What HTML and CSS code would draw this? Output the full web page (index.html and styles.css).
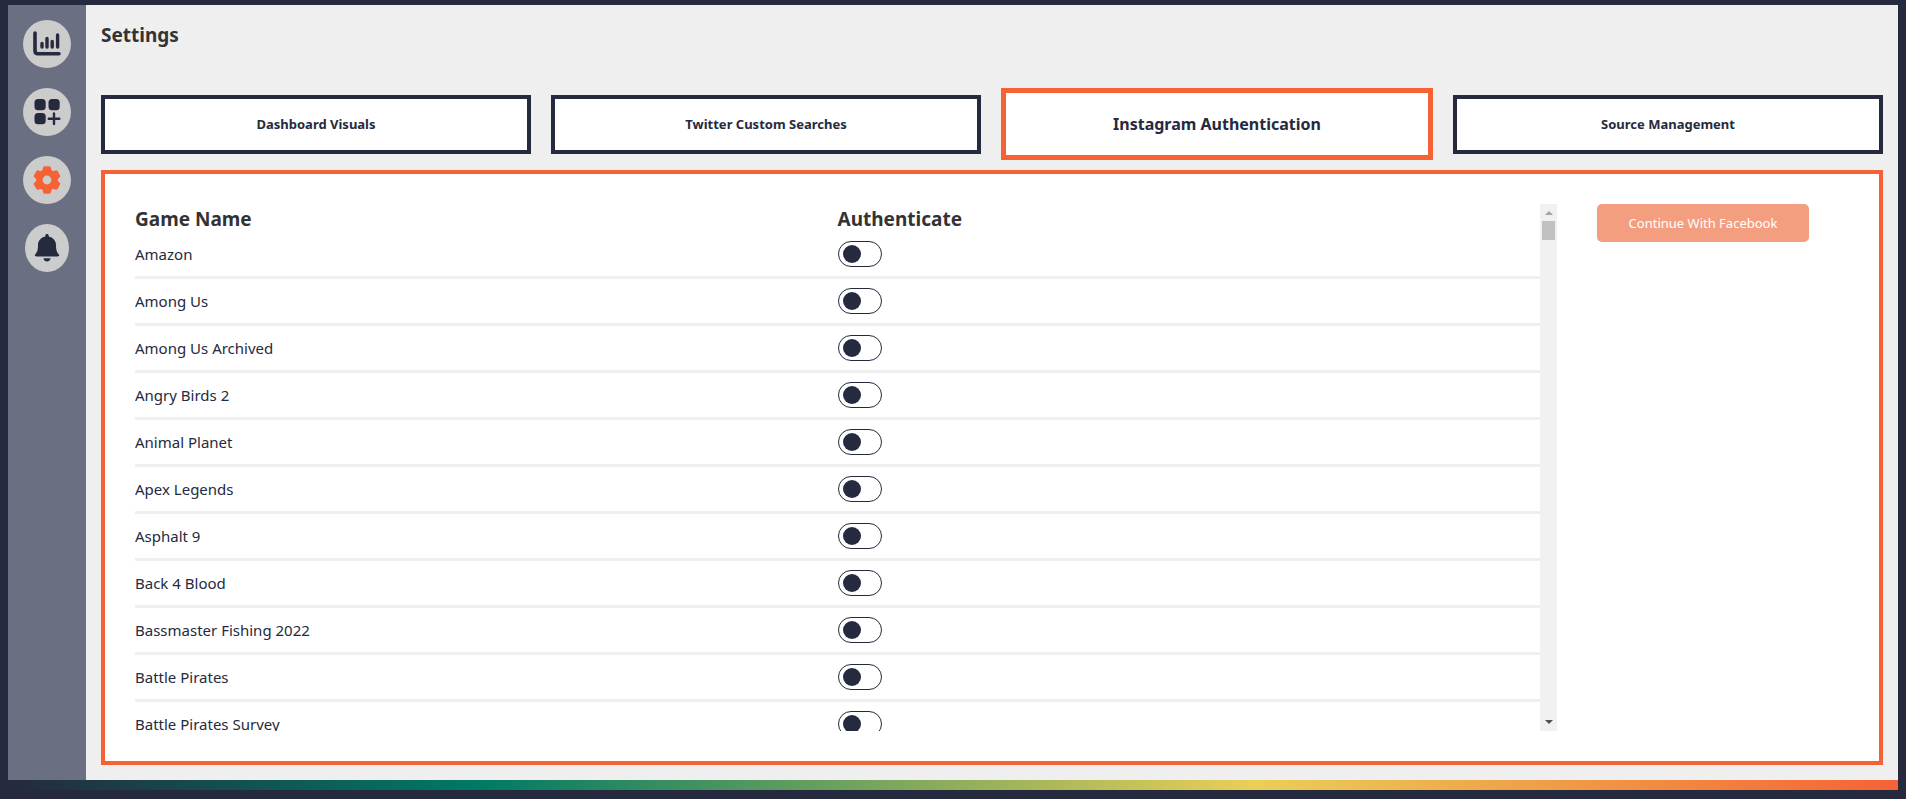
FILE: index.html
```html
<!DOCTYPE html>
<html lang="en">

<head>
    <meta charset="UTF-8">
    <meta name="viewport" content="width=device-width, initial-scale=1.0">
    <title>Settings</title>
    <link rel="stylesheet" href="styles.css">
</head>

<body>
    <div class="app">
        <nav class="sidebar">
            <a href="#" class="nav-item" aria-label="Dashboard">
                <svg width="28" height="26" viewBox="0 0 28 26" fill="none" stroke="#252a3e" stroke-linecap="round">
                    <path d="M2 2v17.800q0 3 3 3h21" stroke-width="3.600" />
                    <path d="M9 12.500v3.500M14 7.500v8.500M19.200 10.500v5.500M24.600 4v12" stroke-width="3.400" />
                </svg>
            </a>
            <a href="#" class="nav-item" aria-label="Add source">
                <svg width="28" height="28" viewBox="0 0 28 28" fill="#252a3e">
                    <rect x="1.500" y="1" width="11.200" height="11.200" rx="3.500" />
                    <rect x="15.500" y="1" width="11.200" height="11.200" rx="3.500" />
                    <rect x="1.500" y="15" width="11.200" height="11.200" rx="3.500" />
                    <path d="M21 15.500v10.500M15.700 20.700h10.600" stroke="#252a3e" stroke-width="2.400" stroke-linecap="round" />
                </svg>
            </a>
            <a href="#" class="nav-item" aria-label="Settings">
                <svg width="28" height="28" viewBox="-14 -14 28 28" fill="#f66235">
                    <circle r="7.300" fill="none" stroke="#f66235" stroke-width="5.800" />
                    <path id="tooth" d="M-6 -8Q-4.300 -9.500 -4 -12Q-3.800 -13.700 -2.300 -13.700H2.300Q3.800 -13.700 4 -12Q4.300 -9.500 6 -8L4 -6H-4z" />
                    <use href="#tooth" transform="rotate(60)" />
                    <use href="#tooth" transform="rotate(120)" />
                    <use href="#tooth" transform="rotate(180)" />
                    <use href="#tooth" transform="rotate(240)" />
                    <use href="#tooth" transform="rotate(300)" />
                </svg>
            </a>
            <a href="#" class="nav-item narrow" aria-label="Notifications">
                <svg width="26" height="30" viewBox="0 0 26 30" fill="#252a3e">
                    <path d="M13 1c1 0 1.700.7 1.700 1.700v.8c4.300.8 7.300 4.300 7.300 8.500 0 5 .8 7 2.700 9.200 1 1.200.5 2.300-1.200 2.300h-21c-1.700 0-2.200-1.100-1.200-2.300C3.200 19 4 17 4 12c0-4.200 3-7.700 7.300-8.500v-.8C11.300 1.700 12 1 13 1z" />
                    <path d="M9.500 25.300h7c0 2-1.500 3.200-3.500 3.200s-3.500-1.200-3.500-3.200z" />
                </svg>
            </a>
        </nav>

        <main class="content">
            <h1>Settings</h1>

            <div class="tabs">
                <button type="button" class="tab">Dashboard Visuals</button>
                <button type="button" class="tab">Twitter Custom Searches</button>
                <button type="button" class="tab active">Instagram Authentication</button>
                <button type="button" class="tab">Source Management</button>
            </div>

            <section class="panel">
                <div class="list-box">
                    <div class="list">
                        <table>
                            <thead>
                                <tr>
                                    <th>Game Name</th>
                                    <th>Authenticate</th>
                                </tr>
                            </thead>
                            <tbody>
                                <tr>
                                    <td><label for="g1">Amazon</label></td>
                                    <td><input type="checkbox" class="toggle" id="g1"></td>
                                </tr>
                                <tr>
                                    <td><label for="g2">Among Us</label></td>
                                    <td><input type="checkbox" class="toggle" id="g2"></td>
                                </tr>
                                <tr>
                                    <td><label for="g3">Among Us Archived</label></td>
                                    <td><input type="checkbox" class="toggle" id="g3"></td>
                                </tr>
                                <tr>
                                    <td><label for="g4">Angry Birds 2</label></td>
                                    <td><input type="checkbox" class="toggle" id="g4"></td>
                                </tr>
                                <tr>
                                    <td><label for="g5">Animal Planet</label></td>
                                    <td><input type="checkbox" class="toggle" id="g5"></td>
                                </tr>
                                <tr>
                                    <td><label for="g6">Apex Legends</label></td>
                                    <td><input type="checkbox" class="toggle" id="g6"></td>
                                </tr>
                                <tr>
                                    <td><label for="g7">Asphalt 9</label></td>
                                    <td><input type="checkbox" class="toggle" id="g7"></td>
                                </tr>
                                <tr>
                                    <td><label for="g8">Back 4 Blood</label></td>
                                    <td><input type="checkbox" class="toggle" id="g8"></td>
                                </tr>
                                <tr>
                                    <td><label for="g9">Bassmaster Fishing 2022</label></td>
                                    <td><input type="checkbox" class="toggle" id="g9"></td>
                                </tr>
                                <tr>
                                    <td><label for="g10">Battle Pirates</label></td>
                                    <td><input type="checkbox" class="toggle" id="g10"></td>
                                </tr>
                                <tr>
                                    <td><label for="g11">Battle Pirates Survey</label></td>
                                    <td><input type="checkbox" class="toggle" id="g11"></td>
                                </tr>
                            </tbody>
                        </table>
                    </div>
                    <div class="scrollbar" aria-hidden="true">
                        <span class="arrow up"></span>
                        <span class="thumb"></span>
                        <span class="arrow down"></span>
                    </div>
                </div>
                <button type="button" class="facebook">Continue With Facebook</button>
            </section>
        </main>
    </div>
    <div class="rainbow"></div>
</body>

</html>
```

FILE: styles.css
```css
* {
    box-sizing: border-box;
}

body {
    margin: 0;
    padding: 5px 8px 9px;
    height: 100vh;
    display: flex;
    flex-direction: column;
    background: #252a3e;
    color: #252a3e;
    font-family: "Segoe UI", "Noto Sans", sans-serif;
}

.app {
    flex: 1;
    min-height: 0;
    display: flex;
}

.rainbow {
    height: 10px;
    background: linear-gradient(to right, #252a3e, #007a64 25%, #eacf57 66%, #f66235);
}

/* sidebar */

.sidebar {
    width: 78px;
    padding-top: 15px;
    display: flex;
    flex-direction: column;
    align-items: center;
    gap: 20px;
    background: #6a6f82;
}

.nav-item {
    width: 48px;
    height: 48px;
    display: flex;
    align-items: center;
    justify-content: center;
    border-radius: 50%;
    background: #ccc;
}

.nav-item.narrow {
    width: 44px;
}

/* content */

.content {
    flex: 1;
    min-width: 0;
    padding: 15px;
    display: flex;
    flex-direction: column;
    background: #efefef;
}

h1 {
    margin: 0 0 38px;
    font-size: 19px;
    line-height: 30px;
    color: #333;
}

.tabs {
    display: flex;
    align-items: center;
    gap: 20px;
    margin-bottom: 10px;
}

.tab {
    flex: 1 1 0;
    height: 59px;
    border: 4px solid #252a3e;
    background: white;
    color: #252a3e;
    font-family: inherit;
    font-size: 13px;
    font-weight: bold;
}

.tab.active {
    height: 72px;
    border: 5px solid #f66235;
    font-size: 16px;
}

.panel {
    flex: 1;
    min-height: 0;
    padding: 30px;
    display: flex;
    align-items: flex-start;
    gap: 40px;
    border: 4px solid #f66235;
    background: white;
}

/* games */

.list-box {
    flex: 1;
    height: 100%;
    display: flex;
}

.list {
    flex: 1;
    overflow-y: auto;
    scrollbar-width: none;
}

table {
    width: 100%;
    table-layout: fixed;
    border-spacing: 0;
}

th,
td {
    padding: 0;
    text-align: left;
}

th {
    height: 28px;
    padding-top: 2px;
    font-size: 19px;
    line-height: 26px;
    color: #333;
}

td {
    height: 47px;
    font-size: 15px;
    line-height: 24px;
    border-bottom: 3px solid #efefef;
}

.toggle {
    appearance: none;
    display: block;
    width: 44px;
    height: 26px;
    margin: 0;
    padding: 3px 4px;
    border: 1px solid #252a3e;
    border-radius: 13px;
    background: white;
}

.toggle::before {
    content: "";
    display: block;
    width: 18px;
    height: 18px;
    border-radius: 50%;
    background: #252a3e;
}

.toggle:checked::before {
    margin-left: auto;
}

.scrollbar {
    width: 17px;
    padding: 7px 0;
    display: flex;
    flex-direction: column;
    align-items: center;
    background: #f1f1f1;
}

.arrow {
    border: 4px solid transparent;
}

.up {
    border-top: 0;
    border-bottom-color: #a3a3a3;
}

.down {
    margin-top: auto;
    border-bottom: 0;
    border-top-color: #505050;
}

.thumb {
    width: 13px;
    height: 19px;
    margin-top: 6px;
    background: #c1c1c1;
}

.facebook {
    width: 212px;
    height: 38px;
    margin-right: 40px;
    border: 0;
    border-radius: 5px;
    background: #f49e80;
    color: white;
    font-family: inherit;
    font-size: 13px;
}
```
